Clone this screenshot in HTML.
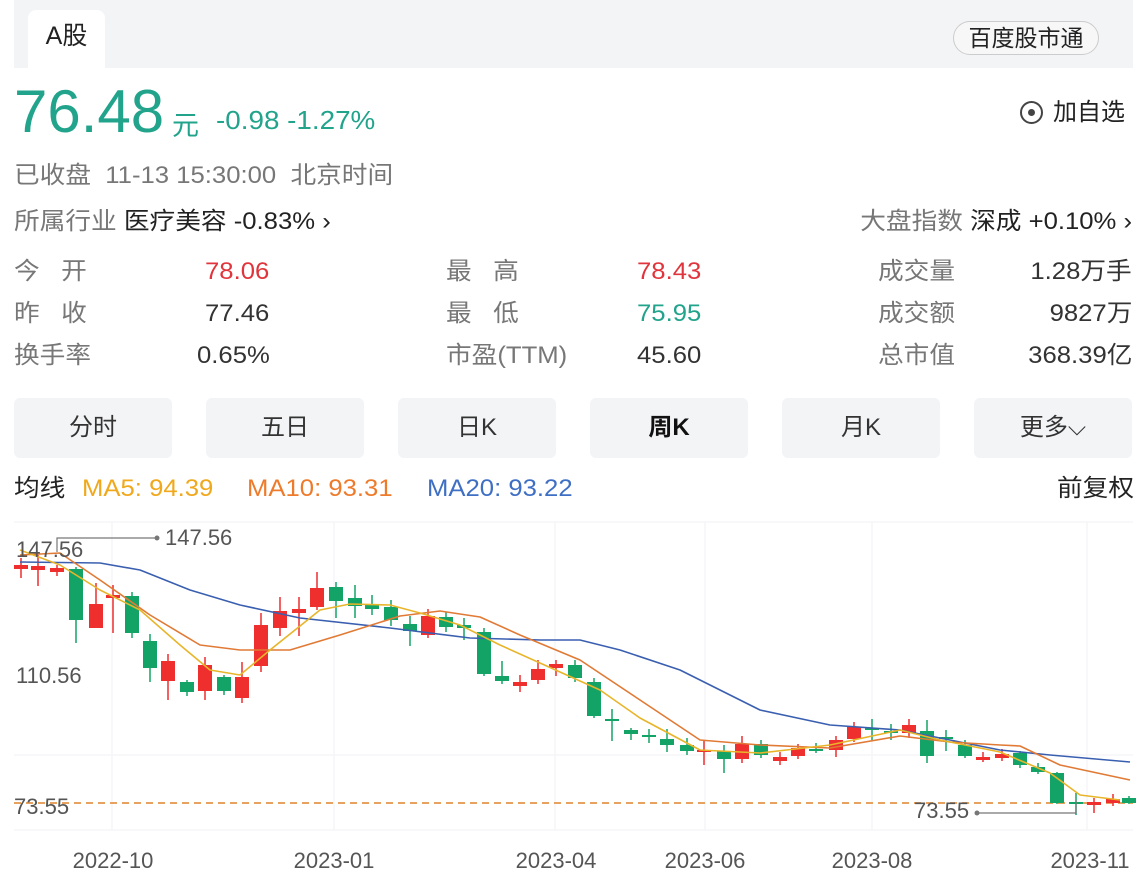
<!DOCTYPE html>
<html><head><meta charset="utf-8"><style>
*{margin:0;padding:0;box-sizing:border-box}
body{width:1148px;height:896px;overflow:hidden;background:#fff;font-family:"Liberation Sans","Noto Sans CJK SC",sans-serif;position:relative;color:#333}
.a{position:absolute;white-space:nowrap}
.band{left:14px;top:0;width:1119px;height:68px;background:#f3f4f6}
.tab{left:28px;top:10px;width:77px;height:58px;background:#fff;border-radius:8px 8px 0 0;font-size:25px;line-height:52px;text-align:center;color:#222}
.pill{left:953px;top:21px;width:146px;height:34px;border:1px solid #ccc;border-radius:17px;background:#f7f7f8;font-size:23px;line-height:32px;text-align:center;color:#222}
.g{color:#777}.t{color:#22a38c}.r{color:#e0353c}
.row{font-size:24px;line-height:30px;transform:scaleX(1.07);transform-origin:left}
.rr{transform-origin:right}
.btn{top:398px;width:158px;height:60px;background:#f3f4f6;border-radius:6px;font-size:24px;line-height:60px;text-align:center;color:#333}
</style></head><body>
<div class="a band"></div>
<div class="a tab">A股</div>
<div class="a pill">百度股市通</div>
<div class="a t" style="left:14px;top:80px;font-size:60px;line-height:64px;transform:scaleX(1.0);">76.48</div>
<div class="a t" style="left:172px;top:104px;font-size:27px">元</div>
<div class="a t row" style="left:216px;top:105px;font-size:26px">-0.98 -1.27%</div>
<div class="a" style="left:1020px;top:98px;font-size:24px;line-height:30px;color:#222"><span style="display:inline-block;width:23px;height:23px;border:2px solid #444;border-radius:50%;vertical-align:-4px;position:relative;margin-right:10px"><span style="position:absolute;left:6px;top:6px;width:7px;height:7px;background:#444;border-radius:50%"></span></span>加自选</div>
<div class="a row g" style="left:14px;top:161px">已收盘&nbsp; 11-13 15:30:00&nbsp; 北京时间</div>
<div class="a row" style="left:14px;top:207px"><span class="g">所属行业</span> <span style="color:#222">医疗美容 -0.83% ›</span></div>
<div class="a row rr" style="right:16px;top:207px"><span class="g">大盘指数</span> <span style="color:#222">深成 +0.10% ›</span></div>
<div class="a row g" style="left:14px;top:257px">今&nbsp;&nbsp; 开</div><div class="a row r" style="left:205px;top:257px">78.06</div>
<div class="a row g" style="left:14px;top:299px">昨&nbsp;&nbsp; 收</div><div class="a row" style="left:205px;top:299px">77.46</div>
<div class="a row g" style="left:14px;top:341px">换手率</div><div class="a row" style="left:197px;top:341px">0.65%</div>
<div class="a row g" style="left:446px;top:257px">最&nbsp;&nbsp; 高</div><div class="a row r" style="left:637px;top:257px">78.43</div>
<div class="a row g" style="left:446px;top:299px">最&nbsp;&nbsp; 低</div><div class="a row t" style="left:637px;top:299px">75.95</div>
<div class="a row g" style="left:446px;top:341px">市盈(TTM)</div><div class="a row" style="left:637px;top:341px">45.60</div>
<div class="a row g" style="left:878px;top:257px">成交量</div><div class="a row rr" style="right:16px;top:257px">1.28万手</div>
<div class="a row g" style="left:878px;top:299px">成交额</div><div class="a row rr" style="right:16px;top:299px">9827万</div>
<div class="a row g" style="left:878px;top:341px">总市值</div><div class="a row rr" style="right:16px;top:341px">368.39亿</div>
<div class="a btn" style="left:14px">分时</div>
<div class="a btn" style="left:206px">五日</div>
<div class="a btn" style="left:398px">日K</div>
<div class="a btn" style="left:590px;font-weight:bold;color:#111">周K</div>
<div class="a btn" style="left:782px">月K</div>
<div class="a btn" style="left:974px">更多⌵</div>
<div class="a row" style="left:14px;top:474px;color:#222">均线</div>
<div class="a row" style="left:82px;top:474px;color:#f0a81c">MA5: 94.39</div>
<div class="a row" style="left:247px;top:474px;color:#ee7b2c">MA10: 93.31</div>
<div class="a row" style="left:427px;top:474px;color:#3f6fc4">MA20: 93.22</div>
<div class="a row rr" style="right:14px;top:474px;color:#222">前复权</div>
<svg class="a" style="left:0;top:0" width="1148" height="896" id="c">
<g stroke="#f3f4f6" stroke-width="1.2">
<line x1="112" y1="522" x2="112" y2="830"/><line x1="334" y1="522" x2="334" y2="830"/><line x1="555" y1="522" x2="555" y2="830"/><line x1="705" y1="522" x2="705" y2="830"/><line x1="872" y1="522" x2="872" y2="830"/><line x1="1087" y1="522" x2="1087" y2="830"/>
<line x1="14" y1="522" x2="1133" y2="522"/><line x1="14" y1="755" x2="1133" y2="755"/><line x1="14" y1="830" x2="1133" y2="830"/>
</g>
<line x1="14" y1="803" x2="1133" y2="803" stroke="#e6a25e" stroke-width="2" stroke-dasharray="7,5"/>
<g id="cd"></g>
<polyline fill="none" stroke="#3a5fb0" stroke-width="1.6" stroke-linejoin="round" points="20,562 100,563 140,570 190,590 240,605 300,618 390,628 470,638 540,640 580,640 620,650 680,670 760,710 830,725 900,730 1000,750 1050,755 1130,762"/>
<polyline fill="none" stroke="#e07a35" stroke-width="1.6" stroke-linejoin="round" points="20,555 60,553 100,580 150,615 200,645 240,650 290,650 340,635 400,616 440,611 480,617 520,635 580,660 640,700 700,740 760,745 830,748 900,736 950,742 1000,745 1020,746 1060,765 1130,780"/>
<polyline fill="none" stroke="#e8b52a" stroke-width="1.6" stroke-linejoin="round" points="20,550 60,565 100,590 140,610 180,645 210,670 240,675 270,650 320,610 350,604 390,605 420,613 460,625 500,645 560,672 600,690 640,718 700,750 760,753 830,745 900,730 940,740 1000,752 1050,773 1080,795 1120,800"/>
<g font-family="Liberation Sans,sans-serif" font-size="22" fill="#555">
<text x="16" y="557">147.56</text><text x="16" y="683">110.56</text><text x="14" y="814">73.55</text>
<text x="165" y="545">147.56</text><text x="914" y="818">73.55</text>
<g font-size="22" text-anchor="middle"><text x="113" y="868">2022-10</text><text x="334" y="868">2023-01</text><text x="556" y="868">2023-04</text><text x="705" y="868">2023-06</text><text x="872" y="868">2023-08</text><text x="1090" y="868">2023-11</text></g>
</g>
<polyline fill="none" stroke="#777" stroke-width="1.2" points="157,538 57,538 57,552"/><circle cx="157" cy="538" r="2.5" fill="#777"/>
<polyline fill="none" stroke="#777" stroke-width="1.2" points="977,813 1076,813 1076,800"/><circle cx="977" cy="813" r="2.5" fill="#777"/>
</svg>
<script>
var R="#ef2e2e",G="#14a366";
var d=[[21,565,569,558,578,R],[38,566,570,555,586,R],[57,568,572,565,576,R],[76,569,620,567,643,G],[96,604,628,583,628,R],[113,595,598,585,633,R],[132,596,633,592,638,G],[150,641,668,634,682,G],[168,661,681,654,700,R],[187,682,692,680,696,G],[205,665,691,657,700,R],[224,677,691,675,695,G],[242,677,698,662,703,R],[261,625,666,613,672,R],[280,611,628,597,636,R],[299,609,613,597,636,R],[317,588,607,572,610,R],[336,587,601,582,618,G],[355,598,606,585,618,G],[372,605,609,595,615,G],[391,607,620,600,626,G],[410,624,631,616,646,G],[428,616,635,609,638,R],[446,617,627,612,632,G],[464,625,628,618,640,G],[484,632,674,628,676,G],[502,676,681,661,684,G],[520,682,686,675,692,R],[538,669,680,660,684,R],[556,664,668,660,676,R],[575,665,678,660,682,G],[594,682,716,678,718,G],[612,719,721,709,741,G],[631,730,734,728,740,G],[649,735,737,729,743,G],[667,739,745,729,752,G],[687,745,751,738,755,G],[704,750,752,740,765,R],[724,751,759,745,773,G],[742,744,759,736,763,R],[761,744,755,740,758,G],[780,757,761,752,765,R],[798,748,756,744,759,R],[816,749,751,743,753,G],[836,740,750,736,757,R],[854,727,739,722,742,R],[872,728,730,719,740,G],[891,731,733,724,740,G],[909,725,733,719,738,R],[927,731,756,720,763,G],[946,737,739,730,751,G],[965,745,756,740,758,G],[983,757,760,752,762,R],[1002,754,758,749,761,R],[1020,753,765,751,768,G],[1038,767,772,763,774,G],[1057,773,803,772,804,G],[1076,802,804,793,815,G],[1094,802,805,798,813,R],[1113,799,803,794,806,R],[1129,798,803,796,804,G]];
var s="";d.forEach(function(c){s+='<line x1="'+c[0]+'" x2="'+c[0]+'" y1="'+c[3]+'" y2="'+c[4]+'" stroke="'+c[5]+'" stroke-width="1.5"/><rect x="'+(c[0]-7)+'" y="'+c[1]+'" width="14" height="'+Math.max(2,c[2]-c[1])+'" fill="'+c[5]+'"/>';});
document.getElementById("cd").innerHTML=s;
</script>
</body></html>
